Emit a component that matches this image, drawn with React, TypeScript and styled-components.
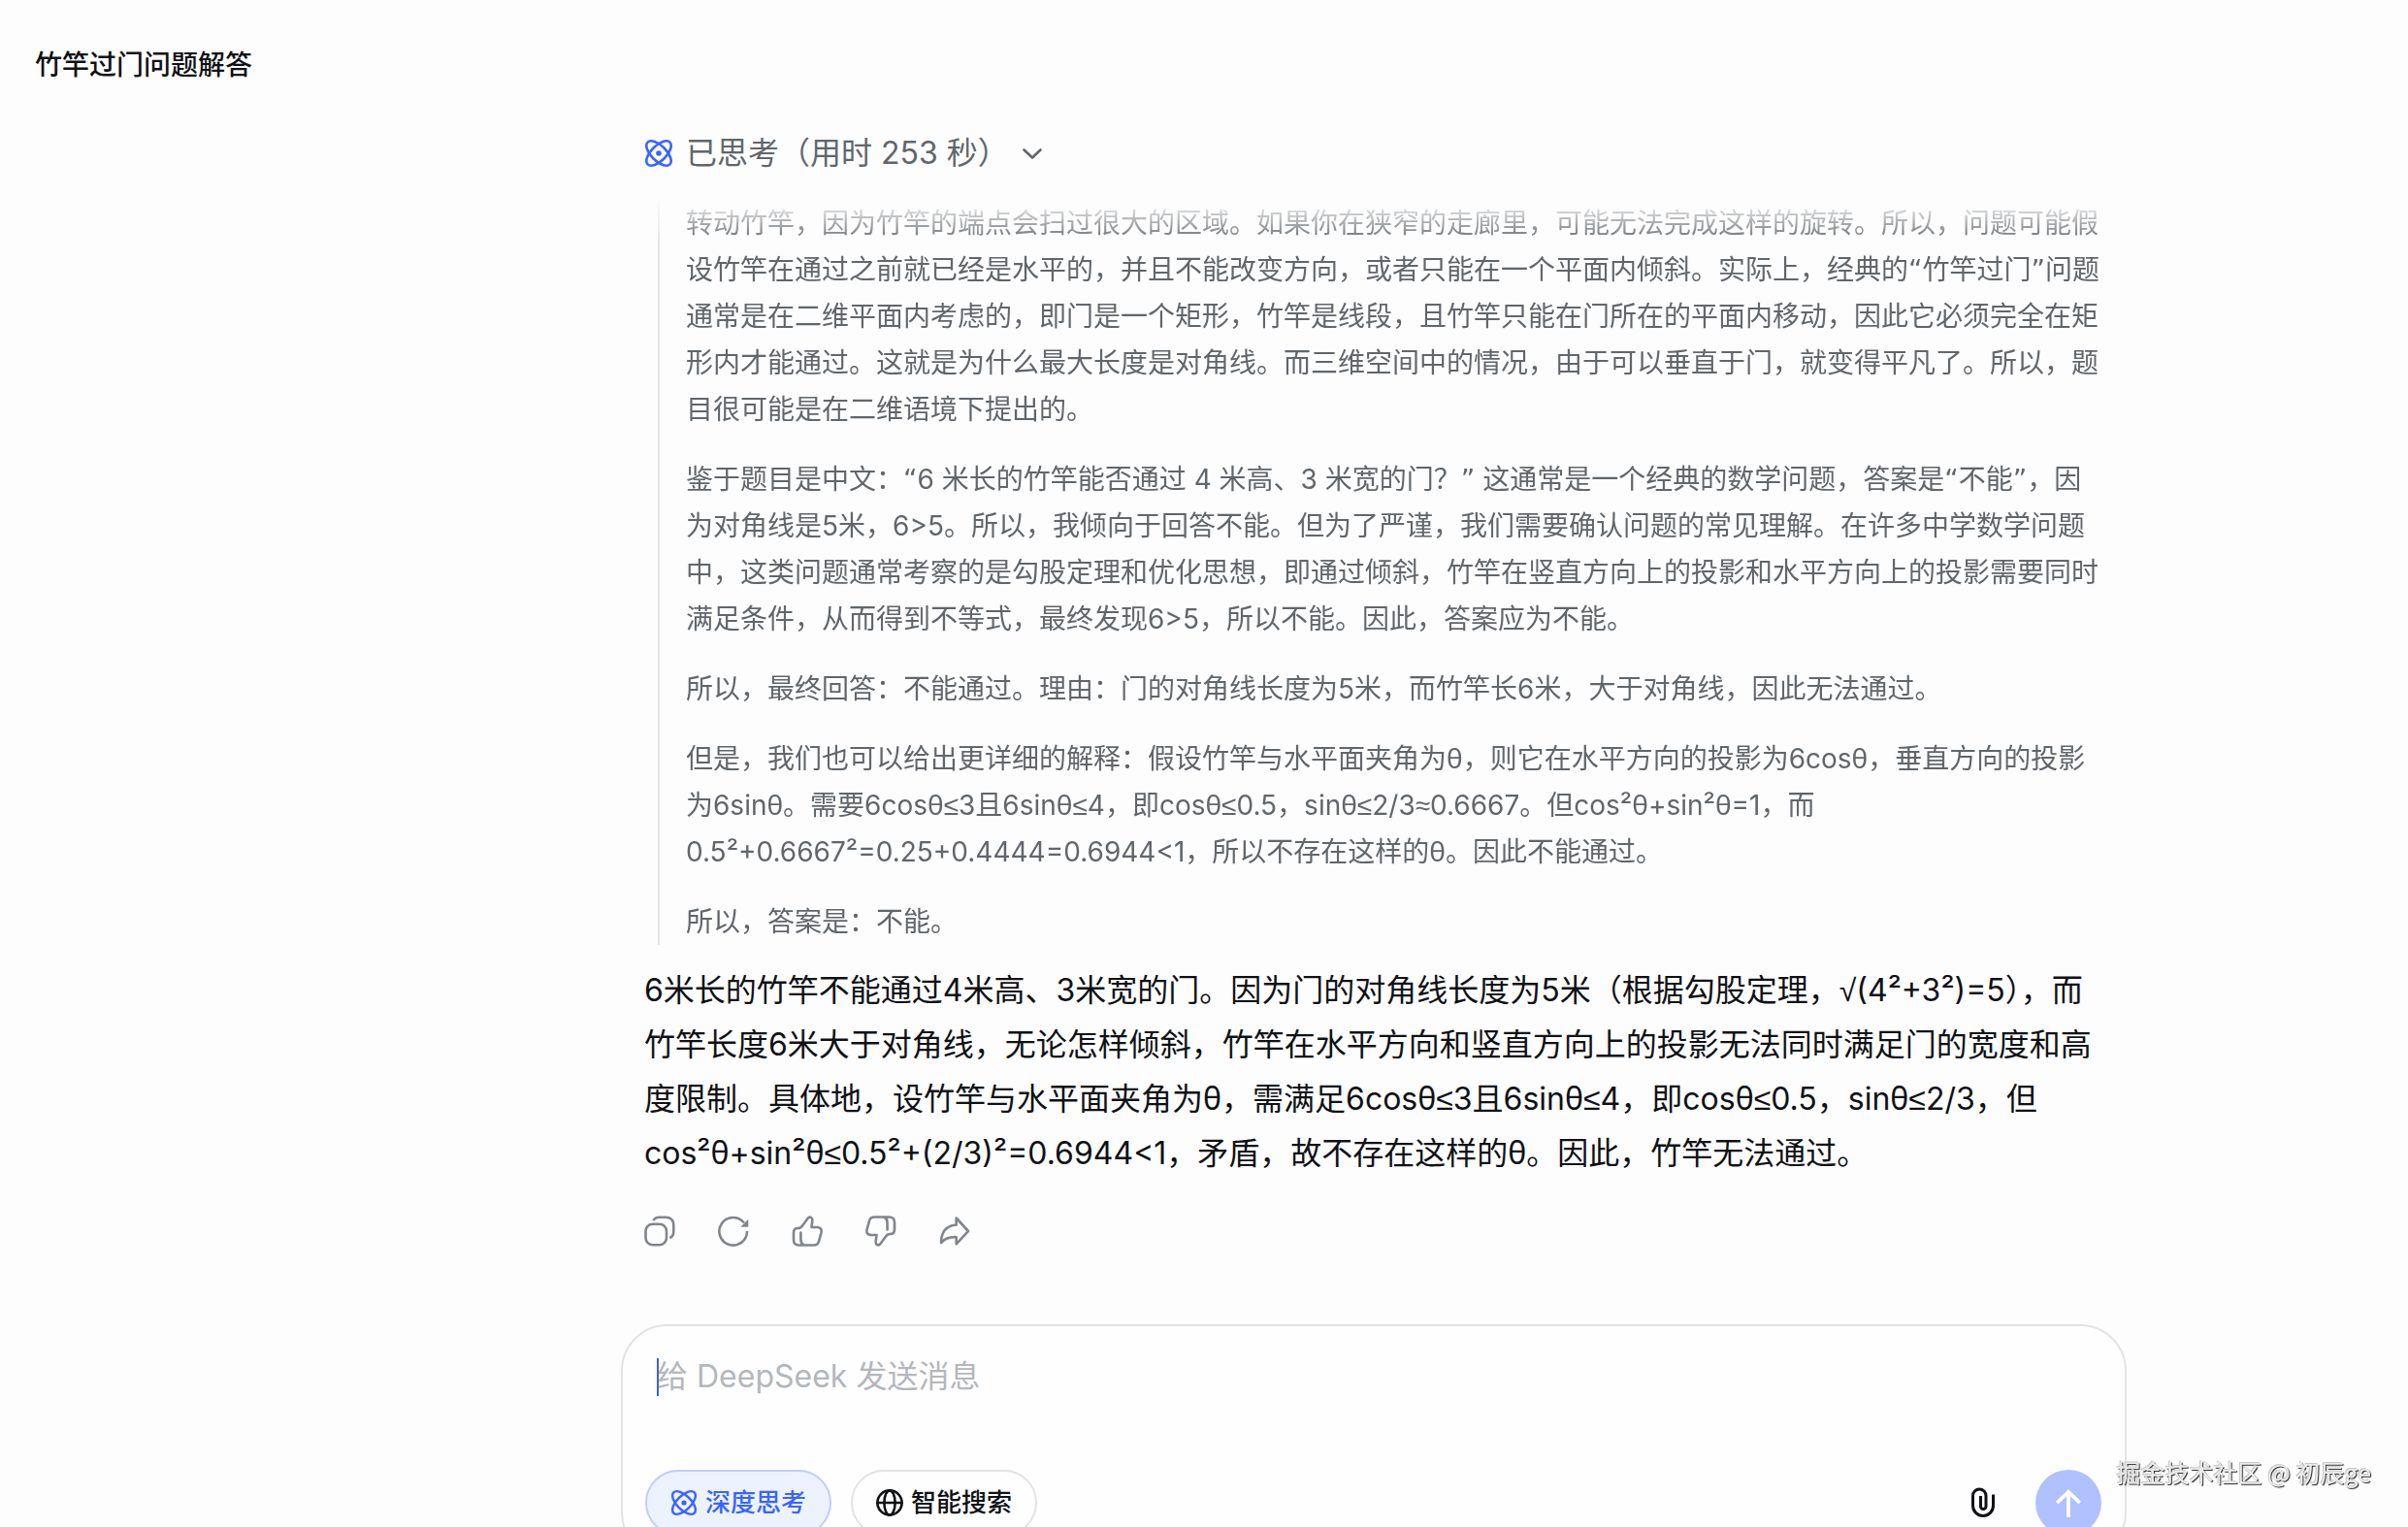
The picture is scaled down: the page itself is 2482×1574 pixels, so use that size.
import React from "react";
import styled, { createGlobalStyle } from "styled-components";

const GlobalStyle = createGlobalStyle`
  *, *::before, *::after { box-sizing: border-box; }
  html, body, #root { height: 100%; }
  body {
    margin: 0;
    overflow: hidden;
    background: #fdfdfd;
    color: #0f1115;
    font-family: Inter, "Noto Sans CJK SC", sans-serif;
  }
  button, textarea { font: inherit; color: inherit; }
  h1, p { margin: 0; }
`;

const Page = styled.div`
  height: 100%;
  display: flex;
  flex-direction: column;
  overflow: hidden;
`;

const Header = styled.header`
  flex: none;
  height: 132px;
  padding: 2px 36px 0;
  display: flex;
  align-items: center;
`;

const Title = styled.h1`
  font-size: 28px;
  line-height: 40px;
  font-weight: 500;
`;

const Main = styled.main`
  flex: none;
  padding-left: 350px;
  display: flex;
  flex-direction: column;
  align-items: center;
`;

const Message = styled.article`
  width: 100%;
  max-width: 1504px;
  display: flex;
  flex-direction: column;
`;

const ThinkToggle = styled.button`
  align-self: flex-start;
  display: flex;
  align-items: center;
  height: 52px;
  padding: 0;
  border: 0;
  background: none;
  color: #61666b;
  font-size: 32px;
  line-height: 52px;
`;

const ThinkLabel = styled.span`
  margin: 0 12px 0 13px;
`;

const ThinkBody = styled.div`
  margin: 22px 0 19px 14px;
  padding-left: 27px;
  border-left: 2px solid #e2e3e5;
  display: flex;
  flex-direction: column;
  gap: 24px;
  color: #61666b;
  font-size: 28px;
  line-height: 48px;
  mask-image: linear-gradient(to bottom, transparent, #000 44px);
`;

const Thought = styled.p`
  white-space: pre-line;
`;

const Answer = styled.p`
  font-size: 32px;
  line-height: 56px;
`;

const Sign = styled.span<{ $quote?: boolean }>`
  font-family: ${(p) => (p.$quote ? '"DejaVu Sans"' : '"Noto Sans", "Liberation Sans"')}, sans-serif;
  line-height: 1;
`;

const Actions = styled.div`
  display: flex;
  gap: 44px;
  padding-top: 36px;
`;

const ActionButton = styled.button`
  display: flex;
  padding: 0;
  border: 0;
  background: none;
  color: #81858c;
`;

const Composer = styled.form`
  width: 100%;
  max-width: 1552px;
  margin-top: 80px;
  padding: 24px 24px 22px 23px;
  border: 2px solid #e2e3e5;
  border-radius: 48px;
  background: #fefefe;
`;

const Prompt = styled.textarea`
  display: block;
  width: 100%;
  height: 104px;
  margin: 0 0 20px;
  padding: 0 12px;
  border: 0;
  outline: 0;
  resize: none;
  background: none;
  font-size: 32px;
  line-height: 56px;
  caret-color: transparent;
  &::placeholder { color: #b4b7bb; opacity: 1; }
`;

const PromptBox = styled.div`
  position: relative;
`;

const Caret = styled.span`
  position: absolute;
  left: 12px;
  top: 9px;
  width: 2px;
  height: 39px;
  background: #3f63cc;
`;

const Toolbar = styled.div`
  display: flex;
  align-items: center;
  gap: 20px;
`;

const Pill = styled.button<{ $on?: boolean }>`
  display: flex;
  align-items: center;
  gap: 8px;
  height: 68px;
  padding: 0 24px;
  border: 2px solid ${(p) => (p.$on ? "#c1ccfd" : "#e2e3e5")};
  border-radius: 34px;
  background: ${(p) => (p.$on ? "#edf3fe" : "#fefefe")};
  color: ${(p) => (p.$on ? "#3964fe" : "#0f1115")};
  font-size: 26px;
  line-height: 40px;
  font-weight: 500;
`;

const Attach = styled.button`
  display: flex;
  margin: 0 16px 0 auto;
  padding: 0;
  border: 0;
  background: none;
`;

const Send = styled.button`
  display: flex;
  align-items: center;
  justify-content: center;
  width: 68px;
  height: 68px;
  padding: 0;
  border: 0;
  border-radius: 50%;
  background: #b0c1ff;
  color: #fff;
`;

const Watermark = styled.span`
  position: fixed;
  right: 38px;
  bottom: 39px;
  font-family: "Noto Sans CJK SC", sans-serif;
  font-size: 25px;
  line-height: 36px;
  color: #ececec;
  text-shadow: -1px -1px 0 #c8c8c8, 1px 1px 1px #222;
  pointer-events: none;
`;

type IconProps = {
  size?: number;
  width?: number;
  cap?: "round" | "butt";
  children: React.ReactNode;
};

const Icon = ({ size = 32, width = 2.6, cap = "round", children }: IconProps) => (
  <svg
    width={size}
    height={size}
    viewBox={`0 0 ${size} ${size}`}
    fill="none"
    stroke="currentColor"
    strokeWidth={width}
    strokeLinecap={cap}
    strokeLinejoin={cap === "round" ? "round" : "miter"}
    aria-hidden="true"
  >
    {children}
  </svg>
);

const Atom = ({ size = 30 }: { size?: number }) => (
  <svg width={size} height={size} viewBox="0 0 30 30" fill="none" stroke="#3964fe" strokeWidth={2.6} aria-hidden="true">
    <ellipse cx="15" cy="15" rx="16.2" ry="7.8" transform="rotate(45 15 15)" />
    <ellipse cx="15" cy="15" rx="16.2" ry="7.8" transform="rotate(-45 15 15)" />
    <circle cx="15" cy="15" r="2.8" fill="#3964fe" stroke="none" />
  </svg>
);

const thumb =
  "M2 17.500Q2 13 6.500 13Q9.500 13 11 10.500L16.500 3Q18 .9 20 2Q21.700 3 21.300 5.500L20.500 12H26.500Q31.500 12.500 30.500 17.500L28 26.500Q27 30.500 23 30.500H7.500Q2 30.500 2 25ZM9.400 17.500V24.500Q9.400 28.500 12 30";

const withSigns = (text: string) =>
  text
    .split(/([θ≤≈√]+|[“”])/)
    .map((part, i) =>
      i % 2 ? (
        <Sign key={i} $quote={/[“”]/.test(part)}>
          {part}
        </Sign>
      ) : (
        part
      ),
    );

const thoughts = [
  "转动竹竿，因为竹竿的端点会扫过很大的区域。如果你在狭窄的走廊里，可能无法完成这样的旋转。所以，问题可能假设竹竿在通过之前就已经是水平的，并且不能改变方向，或者只能在一个平面内倾斜。实际上，经典的“竹竿过门”问题通常是在二维平面内考虑的，即门是一个矩形，竹竿是线段，且竹竿只能在门所在的平面内移动，因此它必须完全在矩形内才能通过。这就是为什么最大长度是对角线。而三维空间中的情况，由于可以垂直于门，就变得平凡了。所以，题目很可能是在二维语境下提出的。",
  "鉴于题目是中文：“6 米长的竹竿能否通过 4 米高、3 米宽的门？” 这通常是一个经典的数学问题，答案是“不能”，因\n为对角线是5米，6>5。所以，我倾向于回答不能。但为了严谨，我们需要确认问题的常见理解。在许多中学数学问题中，这类问题通常考察的是勾股定理和优化思想，即通过倾斜，竹竿在竖直方向上的投影和水平方向上的投影需要同时满足条件，从而得到不等式，最终发现6>5，所以不能。因此，答案应为不能。",
  "所以，最终回答：不能通过。理由：门的对角线长度为5米，而竹竿长6米，大于对角线，因此无法通过。",
  "但是，我们也可以给出更详细的解释：假设竹竿与水平面夹角为θ，则它在水平方向的投影为6cosθ，垂直方向的投影为6sinθ。需要6cosθ≤3且6sinθ≤4，即cosθ≤0.5，sinθ≤2/3≈0.6667。但cos²θ+sin²θ=1，而0.5²+0.6667²=0.25+0.4444=0.6944<1，所以不存在这样的θ。因此不能通过。",
  "所以，答案是：不能。",
];

const answer =
  "6米长的竹竿不能通过4米高、3米宽的门。因为门的对角线长度为5米（根据勾股定理，√(4²+3²)=5），而竹竿长度6米大于对角线，无论怎样倾斜，竹竿在水平方向和竖直方向上的投影无法同时满足门的宽度和高度限制。具体地，设竹竿与水平面夹角为θ，需满足6cosθ≤3且6sinθ≤4，即cosθ≤0.5，sinθ≤2/3，但cos²θ+sin²θ≤0.5²+(2/3)²=0.6944<1，矛盾，故不存在这样的θ。因此，竹竿无法通过。";

export default function App() {
  return (
    <Page lang="zh-CN">
      <GlobalStyle />
      <Header>
        <Title>竹竿过门问题解答</Title>
      </Header>
      <Main>
        <Message>
          <ThinkToggle type="button" aria-expanded="true">
            <Atom />
            <ThinkLabel>已思考（用时 253 秒）</ThinkLabel>
            <Icon size={24}>
              <path d="M3.500 8.500l8.500 8 8.500-8" />
            </Icon>
          </ThinkToggle>
          <ThinkBody>
            {thoughts.map((text) => (
              <Thought key={text}>{withSigns(text)}</Thought>
            ))}
          </ThinkBody>
          <Answer>{withSigns(answer)}</Answer>
          <Actions>
            <ActionButton type="button" aria-label="复制">
              <Icon cap="butt">
                <rect x="1.500" y="8.800" width="21.500" height="21.500" rx="7.200" />
                <path d="M9.300 5.300Q11 1.800 15.500 1.800H22Q30.300 1.800 30.300 10V16Q30.300 21.500 26.300 23" />
              </Icon>
            </ActionButton>
            <ActionButton type="button" aria-label="重新生成">
              <Icon cap="butt">
                <path d="M30 16A14.300 14.300 0 1 1 27 7.500" />
                <path d="M31.300 3.700V11.700H23.300Z" fill="currentColor" stroke="none" />
              </Icon>
            </ActionButton>
            <ActionButton type="button" aria-label="喜欢">
              <Icon>
                <path d={thumb} />
              </Icon>
            </ActionButton>
            <ActionButton type="button" aria-label="不喜欢">
              <Icon>
                <path d={thumb} transform="rotate(180 16 16)" />
              </Icon>
            </ActionButton>
            <ActionButton type="button" aria-label="分享">
              <Icon>
                <path d="M17.700 2.500L30 16 17.700 29.300V22.200Q8 21.500 2 28Q2 11 17.700 9.500Z" />
              </Icon>
            </ActionButton>
          </Actions>
        </Message>
        <Composer onSubmit={(e) => e.preventDefault()}>
          <PromptBox>
            <Prompt aria-label="消息" placeholder="给 DeepSeek 发送消息" />
            <Caret />
          </PromptBox>
          <Toolbar>
            <Pill type="button" $on aria-pressed="true">
              <Atom size={28} />
              深度思考
            </Pill>
            <Pill type="button" aria-pressed="false">
              <Icon size={28}>
                <circle cx="14" cy="14" r="12.600" />
                <ellipse cx="14" cy="14" rx="5.600" ry="12.600" />
                <path d="M1.500 14h25" />
              </Icon>
              智能搜索
            </Pill>
            <Attach type="button" aria-label="附件">
              <Icon size={36} width={3} cap="butt">
                <path d="M28.500 9.500V21a10.500 10.500 0 0 1-21 0V10.750a6.750 6.750 0 0 1 13.500 0V21.750a2.750 2.750 0 0 1-5.500 0V11" />
              </Icon>
            </Attach>
            <Send type="submit" aria-label="发送">
              <Icon size={32} width={3.8} cap="butt">
                <path d="M16 31V5M4.300 16L16 4.800 27.700 16" />
              </Icon>
            </Send>
          </Toolbar>
        </Composer>
      </Main>
      <Watermark>掘金技术社区 @ 初辰ge</Watermark>
    </Page>
  );
}
